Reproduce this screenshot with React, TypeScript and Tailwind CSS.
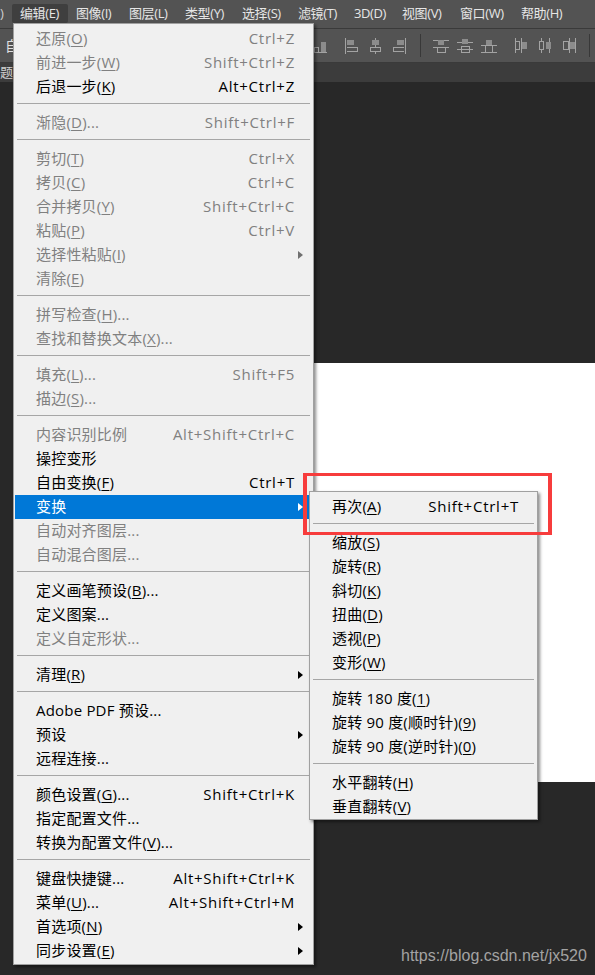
import React from 'react';

type Row = { t?: string; s?: string; off?: boolean; arrow?: boolean; on?: boolean };
const sep: Row = {};

const mainMenu: Row[] = [
  { t: '还原(&O)', s: 'Ctrl+Z', off: true },
  { t: '前进一步(&W)', s: 'Shift+Ctrl+Z', off: true },
  { t: '后退一步(&K)', s: 'Alt+Ctrl+Z' },
  sep,
  { t: '渐隐(&D)...', s: 'Shift+Ctrl+F', off: true },
  sep,
  { t: '剪切(&T)', s: 'Ctrl+X', off: true },
  { t: '拷贝(&C)', s: 'Ctrl+C', off: true },
  { t: '合并拷贝(&Y)', s: 'Shift+Ctrl+C', off: true },
  { t: '粘贴(&P)', s: 'Ctrl+V', off: true },
  { t: '选择性粘贴(&I)', off: true, arrow: true },
  { t: '清除(&E)', off: true },
  sep,
  { t: '拼写检查(&H)...', off: true },
  { t: '查找和替换文本(&X)...', off: true },
  sep,
  { t: '填充(&L)...', s: 'Shift+F5', off: true },
  { t: '描边(&S)...', off: true },
  sep,
  { t: '内容识别比例', s: 'Alt+Shift+Ctrl+C', off: true },
  { t: '操控变形' },
  { t: '自由变换(&F)', s: 'Ctrl+T' },
  { t: '变换', arrow: true, on: true },
  { t: '自动对齐图层...', off: true },
  { t: '自动混合图层...', off: true },
  sep,
  { t: '定义画笔预设(&B)...' },
  { t: '定义图案...' },
  { t: '定义自定形状...', off: true },
  sep,
  { t: '清理(&R)', arrow: true },
  sep,
  { t: 'Adobe PDF 预设...' },
  { t: '预设', arrow: true },
  { t: '远程连接...' },
  sep,
  { t: '颜色设置(&G)...', s: 'Shift+Ctrl+K' },
  { t: '指定配置文件...' },
  { t: '转换为配置文件(&V)...' },
  sep,
  { t: '键盘快捷键...', s: 'Alt+Shift+Ctrl+K' },
  { t: '菜单(&U)...', s: 'Alt+Shift+Ctrl+M' },
  { t: '首选项(&N)', arrow: true },
  { t: '同步设置(&E)', arrow: true },
];

const subMenu: Row[] = [
  { t: '再次(&A)', s: 'Shift+Ctrl+T' },
  sep,
  { t: '缩放(&S)' },
  { t: '旋转(&R)' },
  { t: '斜切(&K)' },
  { t: '扭曲(&D)' },
  { t: '透视(&P)' },
  { t: '变形(&W)' },
  sep,
  { t: '旋转 180 度(&1)' },
  { t: '旋转 90 度(顺时针)(&9)' },
  { t: '旋转 90 度(逆时针)(&0)' },
  sep,
  { t: '水平翻转(&H)' },
  { t: '垂直翻转(&V)' },
];

const bar = [
  { t: '编辑(E)', w: 'w-[56px]', active: true },
  { t: '图像(I)', w: 'w-[53px]' },
  { t: '图层(L)', w: 'w-[56px]' },
  { t: '类型(Y)', w: 'w-[57px]' },
  { t: '选择(S)', w: 'w-[56px]' },
  { t: '滤镜(T)', w: 'w-[56px]' },
  { t: '3D(D)', w: 'w-[48px]' },
  { t: '视图(V)', w: 'w-[58px]' },
  { t: '窗口(W)', w: 'w-[61px]' },
  { t: '帮助(H)', w: 'w-[62px]' },
];

function Label({ text }: { text: string }) {
  const i = text.indexOf('&');
  if (i < 0) return <span className="tracking-[0.2px]">{text}</span>;
  return (
    <span className="tracking-[0.2px]">
      {text.slice(0, i)}
      <u className="underline-offset-2">{text[i + 1]}</u>
      {text.slice(i + 2)}
    </span>
  );
}

function Rows({ rows }: { rows: Row[] }) {
  return (
    <>
      {rows.map((r, idx) =>
        !r.t ? (
          <div key={idx} className="h-[12px] pt-[4px] px-[2px]">
            <div className="h-px w-full bg-[#a6a6a6]" />
          </div>
        ) : (
          <div
            key={idx}
            className={`relative h-[24px] flex items-center justify-between pb-[2px] pl-[21px] pr-[17px] ${
              r.on ? 'bg-[#0078d7] text-white' : r.off ? 'text-[#808080]' : 'text-black'
            }`}
          >
            <Label text={r.t} />
            {r.s && <span className="tracking-[0.75px]">{r.s}</span>}
            {r.arrow && (
              <span
                className={`absolute right-[9px] top-[8px] w-0 h-0 border-y-[4px] border-y-transparent border-l-[5px] ${
                  r.on ? 'border-l-white' : r.off ? 'border-l-[#707070]' : 'border-l-black'
                }`}
              />
            )}
          </div>
        )
      )}
    </>
  );
}

const c = '#a3a3a3';
const f = '#8c8c8c';

// align and distribute glyphs from the options bar
const glyphs: { w: number; body: React.ReactNode }[] = [
  {
    w: 14,
    body: (
      <>
        <path d="M0 14.5h13" stroke={c} />
        <path d="M0.5 9V14M0.5 9H4.5V14" stroke={c} fill="none" />
        <rect x="7" y="4" width="5" height="10" fill={f} />
      </>
    ),
  },
  {
    w: 14,
    body: (
      <>
        <path d="M0.5 0v16" stroke={c} />
        <rect x="2" y="2" width="7" height="5" fill={f} />
        <path d="M2 9.5h10.5v4H2" stroke={c} fill="none" />
      </>
    ),
  },
  {
    w: 14,
    body: (
      <>
        <path d="M6.5 0v2M6.5 7v2M6.5 14v2" stroke={c} />
        <rect x="3" y="2" width="7" height="5" fill={f} />
        <path d="M1.5 9.5h10v4h-10z" stroke={c} fill="none" />
      </>
    ),
  },
  {
    w: 14,
    body: (
      <>
        <path d="M12.5 0v16" stroke={c} />
        <rect x="4" y="2" width="7" height="5" fill={f} />
        <path d="M11 9.5H0.5v4H11" stroke={c} fill="none" />
      </>
    ),
  },
  {
    w: 16,
    body: (
      <>
        <path d="M0 2.5h16M0 9.5h16M0 14.5h0" stroke={c} />
        <rect x="5" y="2" width="6" height="5" fill={f} />
        <path d="M4 10v4.5h8V10" stroke={c} fill="none" />
      </>
    ),
  },
  {
    w: 16,
    body: (
      <>
        <path d="M0 4.5h16M0 11.5h16" stroke={c} />
        <rect x="5" y="1" width="6" height="5" fill={f} />
        <path d="M4 8.5h8v6H4z" stroke={c} fill="none" />
      </>
    ),
  },
  {
    w: 16,
    body: (
      <>
        <path d="M0 7.5h16M0 14.5h16" stroke={c} />
        <rect x="5" y="2" width="6" height="5" fill={f} />
        <path d="M4.5 8v6M11.5 8v6" stroke={c} />
      </>
    ),
  },
  {
    w: 13,
    body: (
      <>
        <path d="M0.5 0v15M1 3.5h3.5v8H1M6.5 0v15" stroke={c} fill="none" />
        <rect x="7" y="4" width="5" height="7" fill={f} />
      </>
    ),
  },
  {
    w: 13,
    body: (
      <>
        <path d="M0.5 3.5h4v8h-4z" stroke={c} fill="none" />
        <path d="M2.5 0v3M2.5 12v3M10.5 0v15" stroke={c} />
        <rect x="7" y="4" width="5" height="7" fill={f} />
      </>
    ),
  },
  {
    w: 13,
    body: (
      <>
        <path d="M0.5 3.5h5v8h-5zM6 0v15" stroke={c} fill="none" />
        <path d="M12.5 0v15" stroke={c} />
        <rect x="7" y="4" width="5" height="7" fill={f} />
      </>
    ),
  },
];

function Glyph({ n }: { n: number }) {
  const g = glyphs[n];
  return (
    <svg width={g.w} height="16" viewBox={`0 0 ${g.w} 16`} shapeRendering="crispEdges" className="shrink-0">
      {g.body}
    </svg>
  );
}

export default function App() {
  return (
    <div
      className="relative w-[595px] h-[975px] overflow-hidden flex flex-col bg-[#282828] text-[15px] leading-none"
      style={{ fontFamily: '"Open Sans", "Noto Sans CJK SC", sans-serif' }}
    >
      {/* menu bar */}
      <div className="h-[29px] shrink-0 bg-[#535353] border-b border-[#3a3a3a] flex items-start pt-[4px] pl-[12px] text-[#e6e6e6]">
        <span className="absolute left-0 top-[7px] text-[13px] text-[#d0d0d0]">)</span>
        {bar.map((b) => (
          <div
            key={b.t}
            className={`${b.w} h-[19px] shrink-0 flex items-center pl-[8px] whitespace-nowrap text-[13px] tracking-[-0.4px] ${
              b.active ? 'bg-[#3f3f3f] rounded-[2px]' : ''
            }`}
          >
            {b.t}
          </div>
        ))}
      </div>

      {/* options bar */}
      <div className="h-[34px] shrink-0 bg-[#535353] border-b border-[#3a3a3a] flex items-center pl-[5px] pr-[5px] text-[#e0e0e0] text-[14px]">
        <span>自</span>
        <div className="ml-auto flex items-center">
          <Glyph n={0} />
          <div className="flex gap-[10px] ml-[17px]">
            <Glyph n={1} />
            <Glyph n={2} />
            <Glyph n={3} />
          </div>
          <div className="ml-[13px] h-[23px] w-px bg-[#383838]" />
          <div className="flex gap-[8px] ml-[12px]">
            <Glyph n={4} />
            <Glyph n={5} />
            <Glyph n={6} />
          </div>
          <div className="flex gap-[11px] ml-[18px]">
            <Glyph n={7} />
            <Glyph n={8} />
            <Glyph n={9} />
          </div>
          <div className="ml-[13px] h-[23px] w-px bg-[#383838]" />
        </div>
      </div>

      {/* tab strip */}
      <div className="h-[19px] shrink-0 bg-[#3c3c3c] flex items-center text-[#cfcfcf] text-[13px]">题-</div>

      {/* workspace */}
      <div className="flex-1 flex justify-end">
        <div className="mt-[281px] w-[281px] h-[419px] bg-white" />
      </div>

      <span
        className="absolute left-[401px] top-[947px] text-[16px] leading-[18px] text-[#a3a3a3]"
        style={{ fontFamily: '"Liberation Sans", sans-serif' }}
      >
        https://blog.csdn.net/jx520
      </span>

      {/* edit menu */}
      <div className="absolute left-[13px] top-[23px] w-[301px] h-[942px] bg-[#f0f0f0] border border-[#a0a0a0] pt-[3px] px-px shadow-[2px_2px_3px_rgba(0,0,0,0.45)]">
        <Rows rows={mainMenu} />
      </div>

      {/* transform submenu */}
      <div className="absolute left-[309px] top-[491px] w-[229px] h-[329px] bg-[#f0f0f0] border border-[#a0a0a0] pt-[3px] px-px shadow-[2px_2px_3px_rgba(0,0,0,0.45)]">
        <Rows rows={subMenu} />
      </div>

      {/* red annotation box */}
      <div className="absolute left-[303px] top-[473px] w-[249px] h-[62px] border-x-4 border-y-[3px] border-[#f73c3c]" />
    </div>
  );
}
